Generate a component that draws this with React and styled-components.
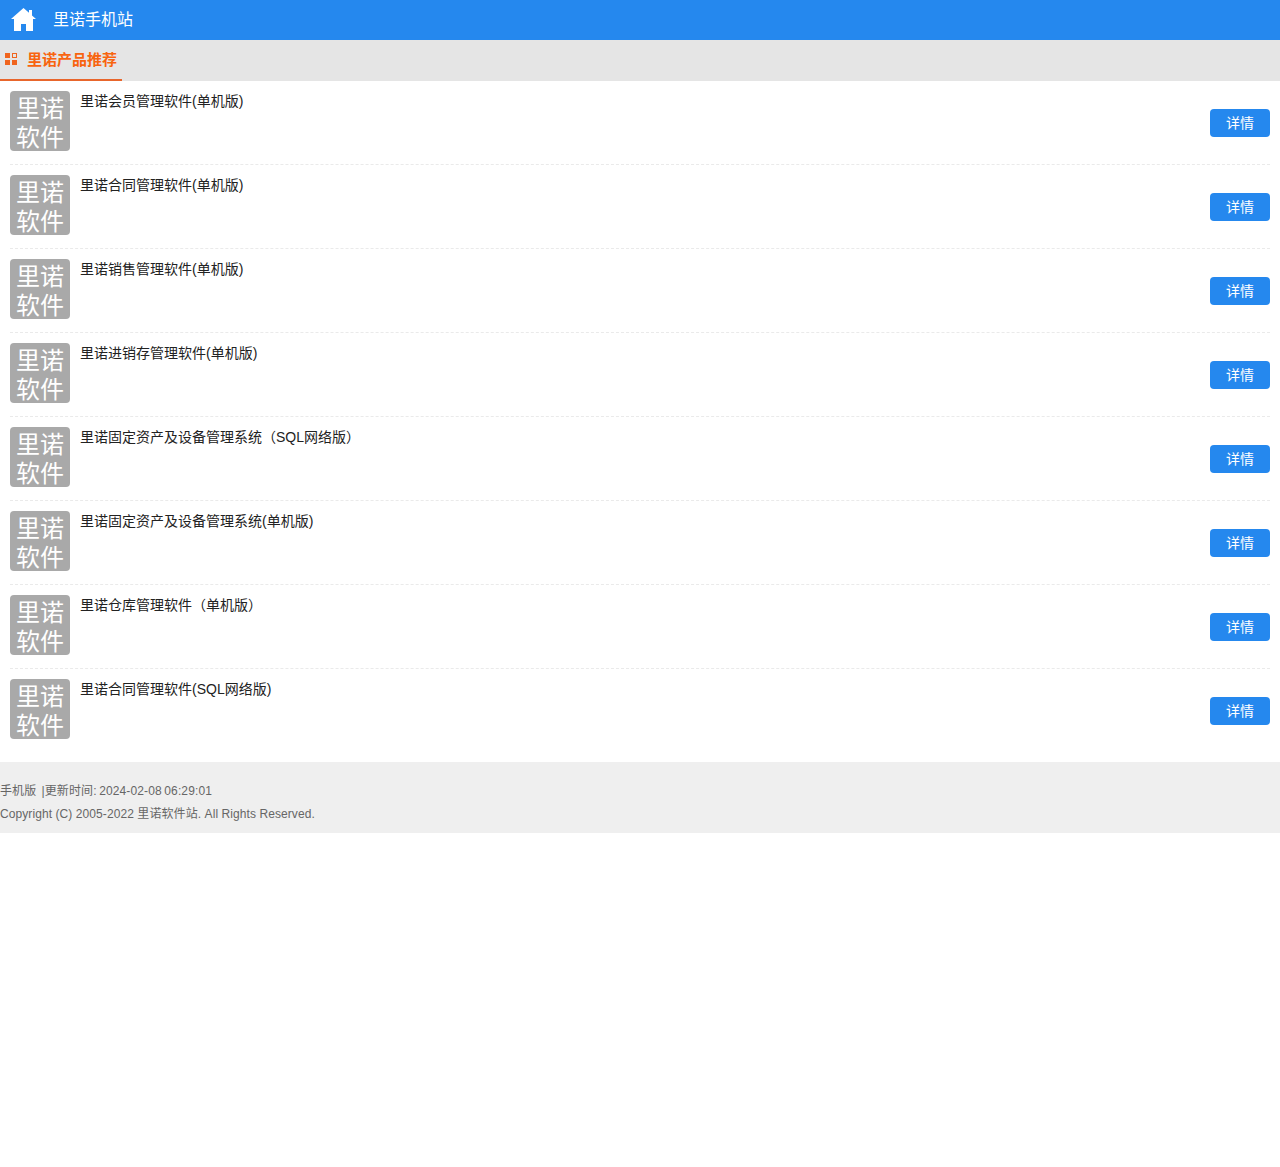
import React from 'react';
import styled, { createGlobalStyle } from 'styled-components';

const GlobalStyle = createGlobalStyle`
  html, body {
    margin: 0;
    padding: 0;
    background: #fff;
    font-family: "Liberation Sans", "Noto Sans CJK SC", sans-serif;
  }
`;

const Page = styled.div`
  min-height: 1167px;
  background: #fff;
`;

const Header = styled.header`
  height: 40px;
  box-sizing: border-box;
  background: #2588ee;
  display: flex;
  align-items: center;
  padding: 0 0 4px 11px;
  color: #fff;
  font-size: 16px;
`;

const HomeIcon = styled.svg`
  width: 25px;
  height: 23px;
  margin: 2px 17px 0 0;
  fill: #fff;
`;

const SectionBar = styled.div`
  height: 41px;
  box-sizing: border-box;
  background: #e5e5e5;
`;

const SectionTab = styled.div`
  width: 122px;
  height: 41px;
  box-sizing: border-box;
  border-bottom: 2px solid #e8662c;
  display: flex;
  align-items: center;
  gap: 10px;
  padding: 0 0 2px 5px;
  color: #f8640f;
  font-size: 15px;
  font-weight: bold;
`;

const GridIcon = styled.svg`
  width: 12px;
  height: 12px;
  fill: #f0641e;
`;

const List = styled.ul`
  list-style: none;
  margin: 0;
  padding: 0 10px 9px;
`;

const Row = styled.li`
  height: 84px;
  box-sizing: border-box;
  padding-top: 10px;
  display: flex;
  align-items: flex-start;
  border-bottom: 1px dashed #eaeaea;

  &:last-child {
    border-bottom: none;
  }
`;

const Thumb = styled.div`
  width: 60px;
  height: 60px;
  flex-shrink: 0;
  box-sizing: border-box;
  border-radius: 4px;
  background: #a9a9a9;
  color: #fff;
  font-size: 24px;
  line-height: 29px;
  text-align: center;
  padding-top: 3px;
`;

const Title = styled.div`
  flex: 1;
  margin-left: 10px;
  font-size: 14px;
  line-height: 20px;
  color: #222;
`;

const DetailButton = styled.a`
  width: 60px;
  height: 28px;
  box-sizing: border-box;
  margin-top: 18px;
  padding-bottom: 2px;
  border-radius: 4px;
  background: #2588ee;
  color: #fff;
  font-size: 14px;
  display: flex;
  align-items: center;
  justify-content: center;
`;

const Footer = styled.footer`
  height: 71px;
  box-sizing: border-box;
  background: #efefef;
  padding-top: 18px;
  color: #666;
  font-size: 12px;
  line-height: 23px;
  letter-spacing: 0.08px;
`;

const UpdatedLine = styled.div`
  letter-spacing: 0.12px;
  word-spacing: -0.9px;
`;

const products = [
  '里诺会员管理软件(单机版)',
  '里诺合同管理软件(单机版)',
  '里诺销售管理软件(单机版)',
  '里诺进销存管理软件(单机版)',
  '里诺固定资产及设备管理系统（SQL网络版）',
  '里诺固定资产及设备管理系统(单机版)',
  '里诺仓库管理软件（单机版）',
  '里诺合同管理软件(SQL网络版)',
];

const App = () => {
  return (
    <Page>
      <GlobalStyle />
      <Header>
        <HomeIcon viewBox="0 0 25 23">
          <path d="M12.5 0 L18 4.8 V2 H21 V7.4 L25 11 H22 V23 H15 V16 H10 V23 H3 V11 H0 Z" />
        </HomeIcon>
        里诺手机站
      </Header>
      <SectionBar>
        <SectionTab>
          <GridIcon viewBox="0 0 12 12">
            <rect x="0" y="0" width="5" height="5" />
            <path fillRule="evenodd" d="M7 0H12V5H7Z M8 1V4H11V1Z" />
            <rect x="0" y="7" width="5" height="5" />
            <rect x="7" y="7" width="5" height="5" />
          </GridIcon>
          里诺产品推荐
        </SectionTab>
      </SectionBar>
      <List>
        {products.map((name) => (
          <Row key={name}>
            <Thumb>里诺<br />软件</Thumb>
            <Title>{name}</Title>
            <DetailButton>详情</DetailButton>
          </Row>
        ))}
      </List>
      <Footer>
        <UpdatedLine>手机版&nbsp; |更新时间: 2024-02-08 06:29:01</UpdatedLine>
        <div>Copyright (C) 2005-2022 里诺软件站. All Rights Reserved.</div>
      </Footer>
    </Page>
  );
};

export default App;
